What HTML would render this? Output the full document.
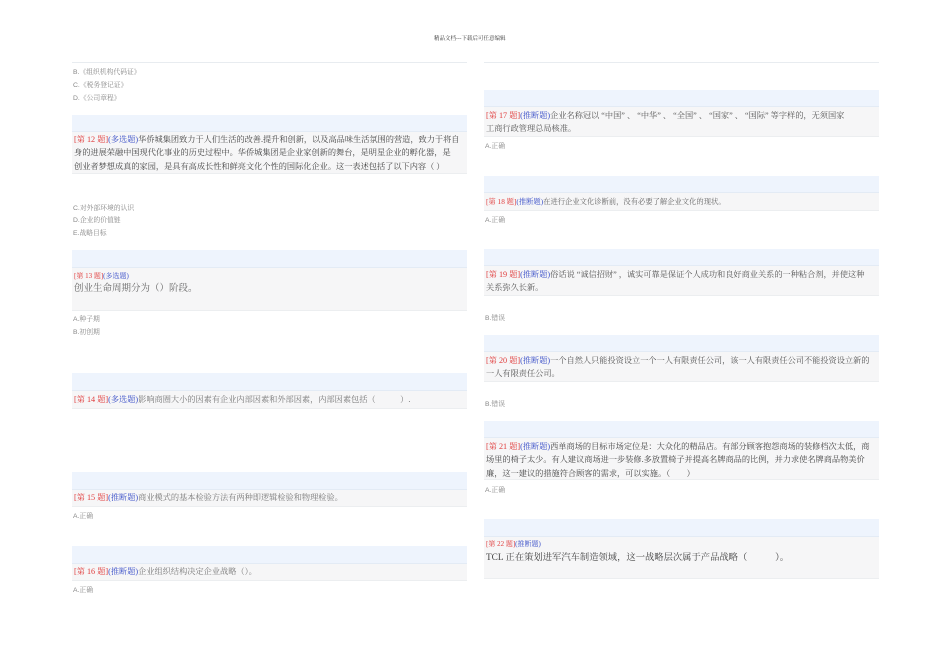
<!DOCTYPE html>
<html><head><meta charset="utf-8"><style>
body{margin:0;width:950px;height:672px;background:#fff;position:relative;overflow:hidden;font-family:"Liberation Serif","Noto Serif CJK SC","Noto Sans CJK SC",serif;}
.a{position:absolute;white-space:nowrap;}
.hd{position:absolute;background:#eef4fd;border-bottom:1px solid #e3ebf5;}
.gb{position:absolute;background:#f6f6f7;border-bottom:1px solid #eceef0;}
.t{position:absolute;font-size:8.2px;color:#444;line-height:13.3px;white-space:nowrap;}
.big{font-size:9.5px;color:#666;}
.r{color:#e03c3c;}.b{color:#3a4fc8;}
.o{position:absolute;font-size:6.8px;color:#888;white-space:nowrap;font-family:"Liberation Sans","Noto Sans CJK SC",sans-serif;}
.o span{font-family:"Liberation Serif","Noto Serif CJK SC",serif}
.ln{position:absolute;height:1px;background:#e8ecf0;}
</style></head><body>
<div class="a" style="left:434px;top:34px;font-size:5.5px;color:#333">精品文档---下载后可任意编辑</div>
<div class="ln" style="left:72px;top:62px;width:395px"></div>
<div class="ln" style="left:484px;top:62px;width:395px"></div>

<div class="o" style="left:73px;top:66px">B.<span>《组织机构代码证》</span></div>
<div class="o" style="left:73px;top:79px">C.<span>《税务登记证》</span></div>
<div class="o" style="left:73px;top:92px">D.<span>《公司章程》</span></div>

<div class="hd" style="left:72px;top:115px;width:395px;height:16px"></div>
<div class="gb" style="left:72px;top:132px;width:395px;height:41px"></div>
<div class="t" style="left:74px;top:133px"><span class="r">[第 12 题]</span><span class="b">(多选题)</span>华侨城集团致力于人们生活的改善.提升和创新，以及高品味生活氛围的营造，致力于将自<br>身的进展荣融中国现代化事业的历史过程中。华侨城集团是企业家创新的舞台，是明星企业的孵化器，是<br>创业者梦想成真的家园，是具有高成长性和鲜亮文化个性的国际化企业。这一表述包括了以下内容（ ）</div>
<div class="o" style="left:73px;top:202px">C.<span>对外部环境的认识</span></div>
<div class="o" style="left:73px;top:214px">D.<span>企业的价值链</span></div>
<div class="o" style="left:73px;top:227px">E.<span>战略目标</span></div>

<div class="hd" style="left:72px;top:250px;width:395px;height:17px"></div>
<div class="gb" style="left:72px;top:268px;width:395px;height:42px"></div>
<div class="t" style="left:74px;top:270px;font-size:7px"><span class="r">[第 13 题]</span><span class="b">(多选题)</span></div>
<div class="t big" style="left:74px;top:283px">创业生命周期分为（）阶段。</div>
<div class="o" style="left:73px;top:313px">A.<span>种子期</span></div>
<div class="o" style="left:73px;top:326px">B.<span>初创期</span></div>

<div class="hd" style="left:72px;top:373px;width:395px;height:17px"></div>
<div class="gb" style="left:72px;top:391px;width:395px;height:17px"></div>
<div class="t" style="left:74px;top:393px;color:#777"><span class="r">[第 14 题]</span><span class="b">(多选题)</span>影响商圈大小的因素有企业内部因素和外部因素，内部因素包括（　　　）.</div>

<div class="hd" style="left:72px;top:472px;width:395px;height:17px"></div>
<div class="gb" style="left:72px;top:490px;width:395px;height:16px"></div>
<div class="t" style="left:74px;top:491px;color:#777"><span class="r">[第 15 题]</span><span class="b">(推断题)</span>商业模式的基本检验方法有两种即逻辑检验和物理检验。</div>
<div class="o" style="left:73px;top:510px">A.<span>正确</span></div>

<div class="hd" style="left:72px;top:546px;width:395px;height:17px"></div>
<div class="gb" style="left:72px;top:564px;width:395px;height:16px"></div>
<div class="t" style="left:74px;top:565px;color:#777"><span class="r">[第 16 题]</span><span class="b">(推断题)</span>企业组织结构决定企业战略（）。</div>
<div class="o" style="left:73px;top:584px">A.<span>正确</span></div>

<!-- right -->
<div class="hd" style="left:484px;top:90px;width:395px;height:16px"></div>
<div class="gb" style="left:484px;top:107px;width:395px;height:29px"></div>
<div class="t" style="left:486px;top:109px;color:#555"><span class="r">[第 17 题]</span><span class="b">(推断题)</span>企业名称冠以 “中国” 、 “中华” 、 “全国” 、 “国家” 、 “国际” 等字样的，无须国家<br>工商行政管理总局核准。</div>
<div class="o" style="left:485px;top:140px">A.<span>正确</span></div>

<div class="hd" style="left:484px;top:176px;width:395px;height:16px"></div>
<div class="gb" style="left:484px;top:193px;width:395px;height:17px"></div>
<div class="t" style="left:486px;top:195px;color:#666;font-size:7.3px"><span class="r">[第 18 题]</span><span class="b">(推断题)</span>在进行企业文化诊断前，没有必要了解企业文化的现状。</div>
<div class="o" style="left:485px;top:214px">A.<span>正确</span></div>

<div class="hd" style="left:484px;top:249px;width:395px;height:16px"></div>
<div class="gb" style="left:484px;top:266px;width:395px;height:29px"></div>
<div class="t" style="left:486px;top:268px;color:#555"><span class="r">[第 19 题]</span><span class="b">(推断题)</span>俗话说 “诚信招财” ，诚实可靠是保证个人成功和良好商业关系的一种粘合剂，并使这种<br>关系弥久长新。</div>
<div class="o" style="left:485px;top:312px">B.<span>错误</span></div>

<div class="hd" style="left:484px;top:335px;width:395px;height:16px"></div>
<div class="gb" style="left:484px;top:352px;width:395px;height:29px"></div>
<div class="t" style="left:486px;top:354px;color:#555"><span class="r">[第 20 题]</span><span class="b">(推断题)</span>一个自然人只能投资设立一个一人有限责任公司，该一人有限责任公司不能投资设立新的<br>一人有限责任公司。</div>
<div class="o" style="left:485px;top:398px">B.<span>错误</span></div>

<div class="hd" style="left:484px;top:421px;width:395px;height:16px"></div>
<div class="gb" style="left:484px;top:438px;width:395px;height:41px"></div>
<div class="t" style="left:486px;top:440px;color:#444"><span class="r">[第 21 题]</span><span class="b">(推断题)</span>西单商场的目标市场定位是：大众化的精品店。有部分顾客抱怨商场的装修档次太低，商<br>场里的椅子太少。有人建议商场进一步装修.多放置椅子并提高名牌商品的比例，并力求使名牌商品物美价<br>廉，这一建议的措施符合顾客的需求，可以实施。（　　）</div>
<div class="o" style="left:485px;top:484px">A.<span>正确</span></div>

<div class="hd" style="left:484px;top:519px;width:395px;height:17px"></div>
<div class="gb" style="left:484px;top:537px;width:395px;height:41px"></div>
<div class="t" style="left:486px;top:538px;font-size:7px"><span class="r">[第 22 题]</span><span class="b">(推断题)</span></div>
<div class="t big" style="left:486px;top:552px;color:#444;font-size:9.3px">TCL 正在策划进军汽车制造领域，这一战略层次属于产品战略（　　　）。</div>
</body></html>
